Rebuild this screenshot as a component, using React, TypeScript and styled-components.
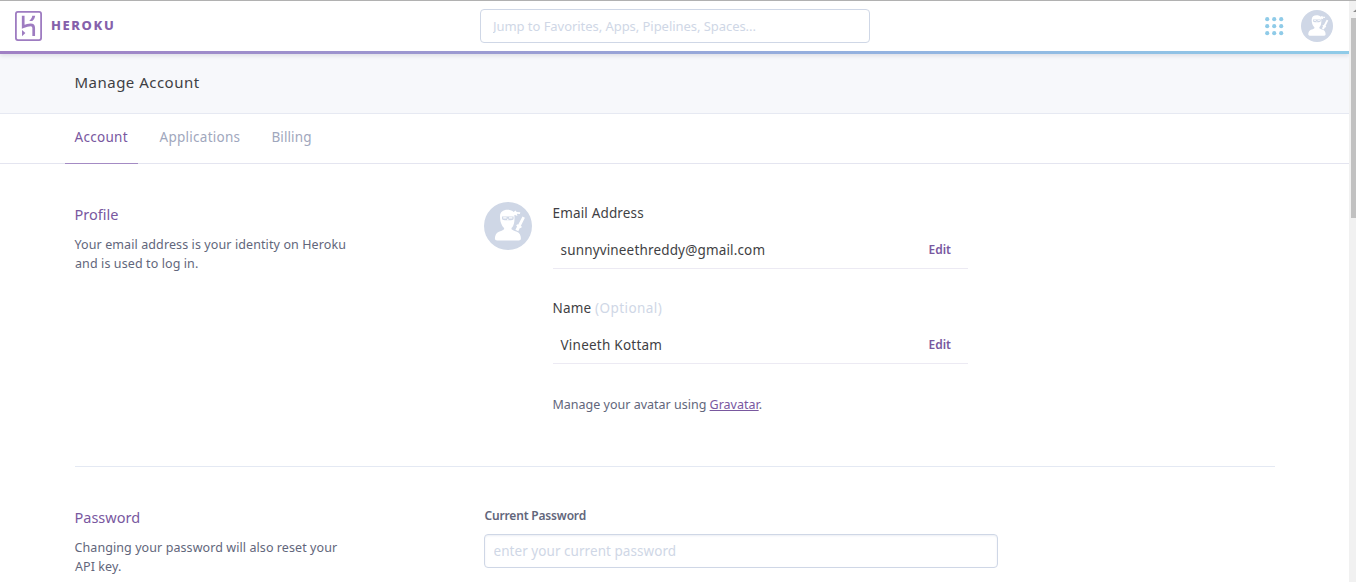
import React from "react";
import styled, { createGlobalStyle } from "styled-components";

const GlobalStyle = createGlobalStyle`
  *, *::before, *::after { box-sizing: border-box; }
  html, body { margin: 0; background: #fff; overflow: hidden; }
  body { font-family: "Noto Sans", "Open Sans", sans-serif; color: #3f3f44; font-size: 13.5px; }
  h1, h2, p { margin: 0; font-weight: 400; }
`;

const Screen = styled.div`
  display: flex;
  width: 1356px;
  height: 582px;
  border-top: 1px solid #b1b1b1;
  overflow: hidden;
`;
const Page = styled.div`
  flex: 1;
  min-width: 0;
  height: 581px;
  overflow: hidden;
`;

const Header = styled.header`
  position: relative;
  display: flex;
  align-items: center;
  height: 53px;
  padding: 0 16px 3px 15px;
  background: #fff;
  box-shadow: 0 2px 4px rgba(60, 60, 90, 0.13);
  &::after {
    content: "";
    position: absolute;
    inset: auto 0 0 0;
    height: 3px;
    background: linear-gradient(90deg, #a080c4 0%, #9b9bd2 36%, #93b3e0 66%, #8fcbe8 100%);
  }
`;
const Brand = styled.a`
  display: flex;
  align-items: center;
  gap: 8px;
  width: 465px;
  color: #8560ab;
`;
const BrandName = styled.span`
  font-size: 13px;
  line-height: 18px;
  font-weight: 800;
  letter-spacing: 1.6px;
  margin-top: -2px;
`;
const HeaderActions = styled.div`
  display: flex;
  align-items: center;
  gap: 17px;
  margin-left: auto;
`;

const TextInput = styled.input<{ $width: number; $pad: number; $size: number; $tracking: number; $inset?: boolean }>`
  display: block;
  width: ${(p) => p.$width}px;
  height: 34px;
  padding: 0 ${(p) => p.$pad}px;
  border: 1px solid #cfd7e6;
  border-radius: 4px;
  outline: none;
  background: #fff;
  box-shadow: ${(p) => (p.$inset ? "inset 0 1px 2px rgba(207, 215, 230, 0.4)" : "none")};
  font: 400 ${(p) => p.$size}px "Noto Sans", sans-serif;
  letter-spacing: ${(p) => p.$tracking}px;
  &::placeholder { color: #cfd7e6; opacity: 1; }
`;

const TitleBar = styled.div`
  height: 60px;
  padding: 17px 74.5px 0;
  background: #f7f8fb;
  border-bottom: 1px solid #e6e9f2;
`;
const Title = styled.h1`
  font-size: 15px;
  line-height: 22px;
  letter-spacing: 0.48px;
`;
const Tabs = styled.nav`
  display: flex;
  gap: 12px;
  height: 50px;
  padding: 0 65px;
  border-bottom: 1px solid #e4e5f0;
`;
const Tab = styled.a<{ $active?: boolean; $width: number; $tracking: number }>`
  height: 50px;
  width: ${(p) => p.$width}px;
  padding: 13px 0 0 9.5px;
  font-size: 13.5px;
  line-height: 20px;
  white-space: nowrap;
  letter-spacing: ${(p) => p.$tracking}px;
  color: ${(p) => (p.$active ? "#79589f" : "#9fa7bd")};
  border-bottom: 1px solid ${(p) => (p.$active ? "#a48bc4" : "transparent")};
`;

const Main = styled.main`
  width: 1275px;
  padding-left: 75px;
`;
const Section = styled.section<{ $height: number }>`
  display: flex;
  height: ${(p) => p.$height}px;
  padding-top: 38px;
  border-bottom: 1px solid #e4e9f3;
`;
const Summary = styled.div`
  width: 409px;
  padding-top: 1px;
  text-indent: -0.5px;
`;
const SectionTitle = styled.h2`
  font-size: 14.5px;
  line-height: 22px;
  color: #79589f;
`;
const Description = styled.p<{ $tracking: number }>`
  margin-top: 10px;
  font-size: 12.5px;
  line-height: 19px;
  letter-spacing: ${(p) => p.$tracking}px;
  color: #62667b;
  white-space: nowrap;
`;
const ProfileFields = styled.div`
  width: 415px;
  margin-left: 21px;
`;
const Field = styled.div`
  height: 95px;
`;
const FieldLabel = styled.div`
  line-height: 22px;
  letter-spacing: 0.16px;
  text-indent: -0.5px;
`;
const Optional = styled.span`
  color: #cfd7e6;
  letter-spacing: 0.45px;
`;
const FieldValue = styled.div`
  display: flex;
  justify-content: space-between;
  height: 45px;
  padding: 15px 17px 0 7.5px;
  line-height: 22px;
  border-bottom: 1px solid #eceaf3;
`;
const Value = styled.span<{ $tracking: number }>`
  letter-spacing: ${(p) => p.$tracking}px;
`;
const EditLink = styled.a`
  font-size: 12px;
  line-height: 22px;
  font-weight: 600;
  color: #79589f;
`;
const AvatarNote = styled.p`
  margin-top: 3px;
  font-size: 12.5px;
  line-height: 20px;
  text-indent: -0.5px;
  color: #62667b;
`;
const InlineLink = styled.a`
  color: #79589f;
  text-decoration: underline;
`;
const PasswordLabel = styled.label`
  display: block;
  padding-left: 0.5px;
  margin-bottom: 7px;
  font-size: 12px;
  line-height: 22px;
  font-weight: 600;
  letter-spacing: -0.17px;
  color: #62667b;
`;

const Scrollbar = styled.div`
  display: flex;
  flex-direction: column;
  width: 7px;
  height: 581px;
  padding: 8px 0 0 2px;
  background: #f1f1f1;
`;
const ScrollArrow = styled.svg`
  display: block;
  align-self: flex-end;
  width: 3px;
  height: 9px;
`;
const Thumb = styled.div`
  height: 200px;
  background: #c1c1c1;
`;

const HerokuMark = () => (
  <svg width="28" height="30" viewBox="0 0 28 30" fill="none">
    <rect x="0.9" y="0.9" width="25.2" height="28.2" rx="2" stroke="#9e7cc1" strokeWidth="1.8" />
    <path d="M8.2 4.8v10.9c2.7-1.1 5.2-1.8 7.4-1.8 2.6 0 3.1 1.3 3.1 3V25" stroke="#9e7cc1" strokeWidth="2.7" />
    <path d="M7 19v6.2l3.4-3.1z" fill="#9e7cc1" />
    <path d="M17.3 4.8h2.9c-.3 2-1.3 3.9-3 5.3h-3c1.7-1.6 2.8-3.4 3.1-5.3z" fill="#9e7cc1" />
  </svg>
);

const GridIcon = () => (
  <svg width="19" height="19" viewBox="0 0 19 19" fill="#8fcbe8">
    {[2.2, 9.2, 16.2].map((y) => [2.2, 9.2, 16.2].map((x) => <circle key={`${x}-${y}`} cx={x} cy={y} r="2.1" />))}
  </svg>
);

const NinjaFigure = styled.svg`
  flex-shrink: 0;
`;
const NinjaAvatar = ({ size }: { size: number }) => (
  <NinjaFigure width={size} height={size} viewBox="0 0 48 48">
    <circle cx="24" cy="24" r="24" fill="#cfd7e6" />
    <g fill="#fff">
      <path d="M16 14.500C16 10 19 7.800 23.500 7.800c2.800 0 4.900.9 6 2.200l2.200-1.500.9 1.500 3.700.2-.4 1.700-3-.1.500 2.100-2.400-.9-.6 0c.3 4.500.1 8-1.200 10.700-.4.900-1 1.700-1.700 2.300v1.200c1.500 1.300 3.500 1.700 5.400 2.500 2.700 1.100 4 3.700 4 6.600 0 1.400-.7 2.200-2.200 2.200H13.200c-1.500 0-2.300-.8-2.300-2.200.1-3 1.400-5.500 4-6.600 1.900-.8 3.900-1.200 5.200-2.500v-1.200c-.8-.6-1.400-1.400-1.900-2.300C16.700 21 16 18 16 14.500z" />
      <path d="M38.500 14.600l2.400 1.200-4.100 8.200 1.100.6-.9 1.600-1-.4-1.700 3.400-2.900-1.400 1.700-3.400-.9-.6.900-1.500 1 .4z" />
    </g>
    <path d="M18 14.400h11.600v2.200c0 1.100-.9 1.700-2.600 1.700h-6.200c-1.800 0-2.800-.6-2.800-1.700z" fill="#cfd7e6" />
    <path d="M19.200 15.300h3.400v1.200h-3.400zM25 15.300h3.400v1.200H25zM23.200 16.800h1.200v1.500h-1.200z" fill="#fff" />
  </NinjaFigure>
);

export default function App() {
  return (
    <>
      <GlobalStyle />
      <Screen>
        <Page>
          <Header>
            <Brand>
              <HerokuMark />
              <BrandName>HEROKU</BrandName>
            </Brand>
            <TextInput $width={390} $pad={12} $size={13} $tracking={-0.05} placeholder="Jump to Favorites, Apps, Pipelines, Spaces..." />
            <HeaderActions>
              <GridIcon />
              <NinjaAvatar size={32} />
            </HeaderActions>
          </Header>
          <TitleBar>
            <Title>Manage Account</Title>
          </TitleBar>
          <Tabs>
            <Tab $active $width={73} $tracking={0.3}>Account</Tab>
            <Tab $width={100} $tracking={0.27}>Applications</Tab>
            <Tab $width={60} $tracking={0.1}>Billing</Tab>
          </Tabs>
          <Main>
            <Section $height={303}>
              <Summary>
                <SectionTitle>Profile</SectionTitle>
                <Description $tracking={0.1}>
                  Your email address is your identity on Heroku
                  <br />
                  and is used to log in.
                </Description>
              </Summary>
              <NinjaAvatar size={48} />
              <ProfileFields>
                <Field>
                  <FieldLabel>Email Address</FieldLabel>
                  <FieldValue>
                    <Value $tracking={0.16}>sunnyvineethreddy@gmail.com</Value>
                    <EditLink>Edit</EditLink>
                  </FieldValue>
                </Field>
                <Field>
                  <FieldLabel>
                    Name <Optional>(Optional)</Optional>
                  </FieldLabel>
                  <FieldValue>
                    <Value $tracking={0.24}>Vineeth Kottam</Value>
                    <EditLink>Edit</EditLink>
                  </FieldValue>
                </Field>
                <AvatarNote>
                  Manage your avatar using <InlineLink>Gravatar</InlineLink>.
                </AvatarNote>
              </ProfileFields>
            </Section>
            <Section $height={303}>
              <Summary>
                <SectionTitle>Password</SectionTitle>
                <Description $tracking={0.08}>
                  Changing your password will also reset your
                  <br />
                  API key.
                </Description>
              </Summary>
              <div>
                <PasswordLabel htmlFor="current-password">Current Password</PasswordLabel>
                <TextInput id="current-password" $width={514} $pad={8.5} $size={13.5} $tracking={0.05} $inset placeholder="enter your current password" />
              </div>
            </Section>
          </Main>
        </Page>
        <Scrollbar>
          <ScrollArrow viewBox="0 0 3 9">
            <path d="M0 3L3 0.5V3z" fill="#8a8a8a" />
          </ScrollArrow>
          <Thumb />
        </Scrollbar>
      </Screen>
    </>
  );
}
